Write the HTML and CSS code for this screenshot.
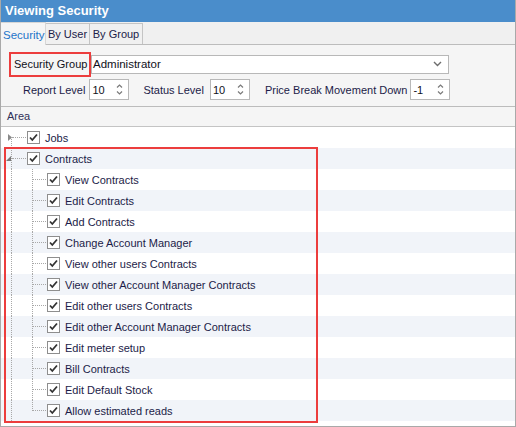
FILE: index.html
```html
<!DOCTYPE html>
<html>
<head>
<meta charset="utf-8">
<link rel="stylesheet" href="styles.css">
</head>
<body>
<div class="window">
  <div class="titlebar">Viewing Security</div>
  <div class="tabs">
    <div class="tab active">Security</div>
    <div class="tab tab-user">By User</div>
    <div class="tab tab-group">By Group</div>
  </div>
  <div class="panel">
    <div class="form-row first">
      <div class="label-box">Security Group</div>
      <div class="combo">
        <span class="combo-text">Administrator</span>
        <svg class="chev" width="9" height="6" viewBox="0 0 9 6"><path d="M1 1 L4.5 4.5 L8 1" fill="none" stroke="#6d6d6d" stroke-width="1.4"/></svg>
      </div>
    </div>
    <div class="form-row second">
      <span class="lbl lbl-report">Report Level</span>
      <div class="spin"><span>10</span><svg width="7" height="13" viewBox="0 0 7 13"><path d="M1 4.5 L3.5 2 L6 4.5 M1 8.5 L3.5 11 L6 8.5" fill="none" stroke="#7a7a7a" stroke-width="1.2"/></svg></div>
      <span class="lbl lbl-status">Status Level</span>
      <div class="spin"><span>10</span><svg width="7" height="13" viewBox="0 0 7 13"><path d="M1 4.5 L3.5 2 L6 4.5 M1 8.5 L3.5 11 L6 8.5" fill="none" stroke="#7a7a7a" stroke-width="1.2"/></svg></div>
      <span class="lbl lbl-price">Price Break Movement Down</span>
      <div class="spin"><span>-1</span><svg width="7" height="13" viewBox="0 0 7 13"><path d="M1 4.5 L3.5 2 L6 4.5 M1 8.5 L3.5 11 L6 8.5" fill="none" stroke="#7a7a7a" stroke-width="1.2"/></svg></div>
    </div>
  </div>
  <div class="tree">
    <div class="tree-head">Area</div>
    <div class="rows">
      <div class="highlight"></div>
      <div class="row top">
        <span class="exp"><svg width="11" height="21" viewBox="0 0 11 21"><path d="M8 7 L12 10.5 L8 14 Z" fill="#8a8a8a" transform="translate(-1 0)"/></svg></span>
        <span class="vtop"></span>
        <span class="hline"></span>
        <span class="cb"></span><span class="txt">Jobs</span>
      </div>
      <div class="row top alt">
        <span class="exp"><svg width="11" height="21" viewBox="0 0 11 21"><path d="M10 8 L10 13 L5 13 Z" fill="#7a7a7a"/></svg></span>
        <span class="vfull"></span>
        <span class="hline"></span>
        <span class="cb"></span><span class="txt">Contracts</span>
      </div>
      <div class="row"><span class="gut"></span><span class="vfull"></span><span class="mid"></span><span class="vfull"></span><span class="hline"></span><span class="cb"></span><span class="txt">View Contracts</span></div>
      <div class="row alt"><span class="gut"></span><span class="vfull"></span><span class="mid"></span><span class="vfull"></span><span class="hline"></span><span class="cb"></span><span class="txt">Edit Contracts</span></div>
      <div class="row"><span class="gut"></span><span class="vfull"></span><span class="mid"></span><span class="vfull"></span><span class="hline"></span><span class="cb"></span><span class="txt">Add Contracts</span></div>
      <div class="row alt"><span class="gut"></span><span class="vfull"></span><span class="mid"></span><span class="vfull"></span><span class="hline"></span><span class="cb"></span><span class="txt">Change Account Manager</span></div>
      <div class="row"><span class="gut"></span><span class="vfull"></span><span class="mid"></span><span class="vfull"></span><span class="hline"></span><span class="cb"></span><span class="txt">View other users Contracts</span></div>
      <div class="row alt"><span class="gut"></span><span class="vfull"></span><span class="mid"></span><span class="vfull"></span><span class="hline"></span><span class="cb"></span><span class="txt">View other Account Manager Contracts</span></div>
      <div class="row"><span class="gut"></span><span class="vfull"></span><span class="mid"></span><span class="vfull"></span><span class="hline"></span><span class="cb"></span><span class="txt">Edit other users Contracts</span></div>
      <div class="row alt"><span class="gut"></span><span class="vfull"></span><span class="mid"></span><span class="vfull"></span><span class="hline"></span><span class="cb"></span><span class="txt">Edit other Account Manager Contracts</span></div>
      <div class="row"><span class="gut"></span><span class="vfull"></span><span class="mid"></span><span class="vfull"></span><span class="hline"></span><span class="cb"></span><span class="txt">Edit meter setup</span></div>
      <div class="row alt"><span class="gut"></span><span class="vfull"></span><span class="mid"></span><span class="vfull"></span><span class="hline"></span><span class="cb"></span><span class="txt">Bill Contracts</span></div>
      <div class="row"><span class="gut"></span><span class="vfull"></span><span class="mid"></span><span class="vfull"></span><span class="hline"></span><span class="cb"></span><span class="txt">Edit Default Stock</span></div>
      <div class="row alt"><span class="gut"></span><span class="vfull"></span><span class="mid"></span><span class="vhalf"></span><span class="hline"></span><span class="cb"></span><span class="txt">Allow estimated reads</span></div>
    </div>
  </div>
</div>
</body>
</html>
```

FILE: styles.css
```css
* { box-sizing: border-box; }
html, body { margin: 0; padding: 0; background: #ffffff; }
body {
  font-family: "Liberation Sans", Arial, sans-serif;
  font-size: 11px;
  color: #1c1c48;
}
.window {
  width: 516px;
  height: 427px;
  border: 1px solid #a9a9a9;
  border-top: none;
  overflow: hidden;
  display: flex;
  flex-direction: column;
}
.titlebar {
  height: 22px;
  background: #4a8dcb;
  color: #ffffff;
  font-weight: bold;
  font-size: 13px;
  line-height: 22px;
  margin: 0 -1px;
  padding-left: 5px;
}
.tabs {
  height: 23px;
  background: #f0f0f0;
  border-bottom: 1px solid #bcbcbc;
  display: flex;
  align-items: flex-end;
  font-size: 11px;
}
.tab {
  height: 21px;
  line-height: 21px;
  border: 1px solid #c4c4c4;
  border-bottom: none;
  border-left: none;
  color: #202048;
  background: #f0f0f0;
  text-align: center;
  white-space: nowrap;
}
.tab-user { width: 44px; }
.tab-group { width: 53px; }
.tab.active {
  height: 23px;
  margin-bottom: -1px;
  background: #f5f5f5;
  color: #1f74c9;
  text-align: left;
  padding-left: 2px;
  line-height: 24px;
  border-color: #d6d6d6;
  width: 45px;
  font-size: 11.5px;
}
.panel {
  background: #f5f5f5;
  height: 62px;
  border-bottom: 1px solid #bcbcbc;
  padding-left: 8px;
}
.form-row { display: flex; align-items: center; }
.form-row.first { margin-top: 6px; height: 26px; }
.label-box {
  width: 82px;
  height: 25px;
  border: 2px solid #ec3d3d;
  line-height: 21px;
  padding-left: 3px;
  color: #101020;
  white-space: nowrap;
  font-size: 11px;
}
.combo {
  width: 358px;
  height: 19px;
  background: #ffffff;
  border: 1px solid #b8b8b8;
  display: flex;
  align-items: center;
  justify-content: space-between;
  padding: 0 6px 0 1px;
  color: #101020;
  font-size: 11.5px;
}
.chev { display: block; }
.form-row.second { margin-top: 2px; height: 21px; }
.lbl { color: #1c1c48; white-space: nowrap; }
.lbl-report { margin-left: 14px; margin-right: 4px; }
.lbl-status { margin-left: 14px; margin-right: 6px; }
.lbl-price { margin-left: 15px; margin-right: 3px; }
.spin {
  width: 40px;
  height: 21px;
  background: #ffffff;
  border: 1px solid #b8b8b8;
  display: flex;
  align-items: center;
  justify-content: space-between;
  padding: 0 5px 0 2px;
  color: #101020;
}
.spin svg { display: block; }
.tree {
  flex: 1;
  display: flex;
  flex-direction: column;
  background: #ffffff;
}
.tree-head {
  height: 20px;
  background: #f5f5f5;
  border-bottom: 1px solid #c4c4c4;
  line-height: 19px;
  padding-left: 6px;
  color: #303058;
}
.rows { position: relative; flex: 1; }
.highlight {
  position: absolute;
  left: 3px;
  top: 20px;
  width: 314px;
  height: 276px;
  border: 2px solid #ec3d3d;
  pointer-events: none;
  z-index: 2;
}
.row {
  height: 21px;
  display: flex;
  align-items: stretch;
  background: #ffffff;
}
.row.alt { background: #f1f4f9; }
.exp { width: 11px; display: flex; }
.exp svg { display: block; }
.gut { width: 10px; }
.mid { width: 20px; }
.vfull {
  width: 1px;
  border-left: 1px dotted #a8a8a8;
}
.vtop {
  width: 1px;
  border-left: 1px dotted #a8a8a8;
  margin-top: 12px;
}
.vhalf {
  width: 1px;
  height: 11px;
  border-left: 1px dotted #a8a8a8;
}
.row .exp + .vtop, .row .exp + .vfull { margin-left: -1px; }
.hline {
  width: 13px;
  height: 0;
  align-self: center;
  border-top: 1px dotted #a8a8a8;
}
.row.top .hline { width: 14px; }
.cb {
  width: 13px;
  height: 13px;
  align-self: center;
  margin-left: 1px;
  border: 1px solid #8e8e8e;
  background: #ffffff url("data:image/svg+xml;utf8,<svg xmlns='http://www.w3.org/2000/svg' width='11' height='11' viewBox='0 0 11 11'><path d='M2 5.5 L4.3 8 L9 2.5' fill='none' stroke='%23333' stroke-width='1.8'/></svg>") no-repeat center;
}
.txt { align-self: center; margin-left: 5px; white-space: nowrap; color: #1c1c48; font-size: 11px; }
```
